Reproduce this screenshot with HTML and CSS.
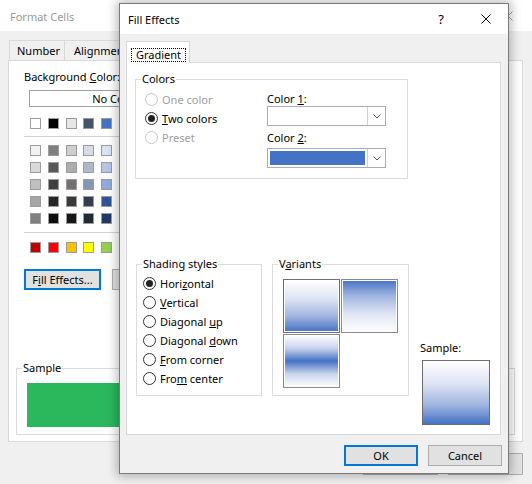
FILE: index.html
```html
<!DOCTYPE html>
<html>
<head>
<meta charset="utf-8">
<link rel="stylesheet" href="styles.css">
</head>
<body>
<div class="fc">
  <div class="fc-title">
    <span>Format Cells</span>
    <svg class="x-icon" width="10" height="10" viewBox="0 0 10 10"><path d="M0.5 0.5L9.5 9.5M9.5 0.5L0.5 9.5" stroke="#9a9a9a" stroke-width="1"/></svg>
  </div>
  <div class="fc-body">
    <div class="fc-tabs">
      <div class="fc-tab tab-number">Number</div>
      <div class="fc-tab tab-align">Alignment</div>
    </div>
    <div class="fc-panel">
      <div class="bg-label">Background <u>C</u>olor:</div>
      <div class="nocolor">No Color</div>
      <div class="swatches top-row">
        <span class="sw" style="background:#ffffff"></span>
        <span class="sw" style="background:#000000"></span>
        <span class="sw" style="background:#e7e6e6"></span>
        <span class="sw" style="background:#44546a"></span>
        <span class="sw" style="background:#4472c4"></span>
      </div>
      <div class="sep"></div>
      <div class="swatches grid">
        <span class="sw" style="background:#f2f2f2"></span>
        <span class="sw" style="background:#7f7f7f"></span>
        <span class="sw" style="background:#d0cece"></span>
        <span class="sw" style="background:#d6dce5"></span>
        <span class="sw" style="background:#dae3f3"></span>
        <span class="sw" style="background:#d9d9d9"></span>
        <span class="sw" style="background:#595959"></span>
        <span class="sw" style="background:#aeabab"></span>
        <span class="sw" style="background:#adb9ca"></span>
        <span class="sw" style="background:#b4c7e7"></span>
        <span class="sw" style="background:#bfbfbf"></span>
        <span class="sw" style="background:#404040"></span>
        <span class="sw" style="background:#757171"></span>
        <span class="sw" style="background:#8497b0"></span>
        <span class="sw" style="background:#8faadc"></span>
        <span class="sw" style="background:#a6a6a6"></span>
        <span class="sw" style="background:#262626"></span>
        <span class="sw" style="background:#3b3838"></span>
        <span class="sw" style="background:#333f50"></span>
        <span class="sw" style="background:#2f5597"></span>
        <span class="sw" style="background:#7f7f7f"></span>
        <span class="sw" style="background:#0d0d0d"></span>
        <span class="sw" style="background:#171717"></span>
        <span class="sw" style="background:#222a35"></span>
        <span class="sw" style="background:#1f3864"></span>
      </div>
      <div class="sep sep2"></div>
      <div class="swatches std-row">
        <span class="sw" style="background:#c00000"></span>
        <span class="sw" style="background:#ff0000"></span>
        <span class="sw" style="background:#ffc000"></span>
        <span class="sw" style="background:#ffff00"></span>
        <span class="sw" style="background:#92d050"></span>
      </div>
      <div class="fc-buttons">
        <div class="btn default fill-btn">F<u>i</u>ll Effects...</div>
        <div class="btn more-btn">More Colors...</div>
      </div>
      <fieldset class="fc-sample">
        <legend>Sample</legend>
        <div class="green"></div>
      </fieldset>
    </div>
    <div class="fc-footer">
      <div class="btn"></div>
      <div class="btn"></div>
    </div>
  </div>
</div>

<div class="fe">
  <div class="fe-title">
    <span class="fe-title-text">Fill Effects</span>
    <span class="help">?</span>
    <svg class="close" width="10" height="10" viewBox="0 0 10 10"><path d="M0.5 0.5L9.5 9.5M9.5 0.5L0.5 9.5" stroke="#000" stroke-width="1"/></svg>
  </div>
  <div class="fe-body">
    <div class="fe-tab"><span class="focus-text">Gradient</span></div>
    <div class="fe-panel">
      <fieldset class="colors">
        <legend>Colors</legend>
        <div class="colors-inner">
          <div class="radios">
            <div class="radio disabled"><span class="circle"></span><span>One color</span></div>
            <div class="radio checked"><span class="circle"></span><span><u>T</u>wo colors</span></div>
            <div class="radio disabled"><span class="circle"></span><span>Preset</span></div>
          </div>
          <div class="combos">
            <div class="combo-label first">Color <u>1</u>:</div>
            <div class="combo">
              <span class="combo-value"></span>
              <span class="combo-btn"><svg width="8" height="5" viewBox="0 0 8 5"><path d="M0.5 0.5L4 4L7.5 0.5" fill="none" stroke="#555" stroke-width="1"/></svg></span>
            </div>
            <div class="combo-label second">Color <u>2</u>:</div>
            <div class="combo combo2">
              <span class="combo-value"><span class="blue-bar"></span></span>
              <span class="combo-btn"><svg width="8" height="5" viewBox="0 0 8 5"><path d="M0.5 0.5L4 4L7.5 0.5" fill="none" stroke="#555" stroke-width="1"/></svg></span>
            </div>
          </div>
        </div>
      </fieldset>
      <div class="row2">
        <fieldset class="shading">
          <legend>Shading styles</legend>
          <div class="shading-inner">
            <div class="radio checked"><span class="circle"></span><span>Hori<u>z</u>ontal</span></div>
            <div class="radio"><span class="circle"></span><span><u>V</u>ertical</span></div>
            <div class="radio"><span class="circle"></span><span>Diagonal <u>u</u>p</span></div>
            <div class="radio"><span class="circle"></span><span>Diagonal <u>d</u>own</span></div>
            <div class="radio"><span class="circle"></span><span><u>F</u>rom corner</span></div>
            <div class="radio"><span class="circle"></span><span>Fro<u>m</u> center</span></div>
          </div>
        </fieldset>
        <fieldset class="variants">
          <legend>V<u>a</u>riants</legend>
          <div class="variant-grid">
            <div class="variant v1 selected"></div>
            <div class="variant v2"></div>
            <div class="variant v3"></div>
          </div>
        </fieldset>
        <div class="sample-col">
          <div class="sample-label">Sample:</div>
          <div class="sample-box"></div>
        </div>
      </div>
    </div>
    <div class="fe-buttons">
      <div class="btn default">OK</div>
      <div class="btn">Cancel</div>
    </div>
  </div>
</div>
</body>
</html>
```

FILE: styles.css
```css
* { box-sizing: border-box; }
html, body { margin: 0; padding: 0; }
body {
  width: 532px;
  height: 484px;
  overflow: hidden;
  position: relative;
  font-family: "Noto Sans", "Segoe UI", sans-serif;
  font-size: 11px;
  color: #000;
  background: #f0f0f0;
}
u { text-underline-offset: 1px; }

/* ---------- Format Cells (background window) ---------- */
.fc { width: 532px; height: 484px; background: #f0f0f0; }
.fc-title {
  height: 31px;
  background: #fff;
  display: flex;
  align-items: center;
  justify-content: space-between;
  padding: 1px 19px 0 10px;
  color: #9a9a9a;
}
.fc-body { padding: 9px 9px 0 8px; }
.fc-tabs { display: flex; height: 20px; margin-left: 1px; }
.fc-tab {
  border: 1px solid #d9d9d9;
  border-bottom: none;
  line-height: 19px;
  padding-left: 7px;
}
.tab-number { width: 56px; }
.tab-align { width: 90px; border-left: none; padding-left: 9px; }
.fc-panel {
  width: 515px;
  height: 382px;
  background: #fff;
  border: 1px solid #d9d9d9;
  padding-top: 8px;
}
.bg-label { margin-left: 15px; line-height: 15px; }
.nocolor {
  margin: 6px 0 0 20px;
  width: 172px;
  height: 17px;
  border: 1px solid #a0a0a0;
  text-align: center;
  line-height: 15px;
}
.swatches {
  display: grid;
  grid-template-columns: repeat(5, 11px);
  column-gap: 6.75px;
  row-gap: 6px;
  margin-left: 21px;
}
.top-row { margin-top: 11px; }
.grid { margin-top: 8px; }
.std-row { margin-top: 9px; }
.sw { width: 11px; height: 11px; border: 1px solid #9c9c9c; display: block; }
.sep { height: 1px; background: #d2d2d2; margin: 7px 0 0 15px; width: 220px; }
.sep2 { margin-top: 8px; }
.fc-buttons { display: flex; gap: 11px; margin: 16px 0 0 15px; }
.btn {
  width: 74px;
  height: 21px;
  background: #e1e1e1;
  border: 1px solid #adadad;
  display: flex;
  align-items: center;
  justify-content: center;
  white-space: nowrap;
}
.btn.default { border: 2px solid #0078d7; }
.fill-btn { width: 77px; }
.more-btn { width: 90px; }
.fc-sample {
  margin: 71px 0 0 7px;
  width: 499px;
  height: 74px;
}
fieldset {
  margin: 0;
  padding: 0;
  border: 1px solid #dcdcdc;
  min-width: 0;
}
legend { padding: 0 1px; margin-left: 5px; line-height: 14px; }
.green { margin: 8px 0 0 10px; width: 477px; height: 44px; background: #2bb75c; }
.fc-footer { display: flex; justify-content: flex-end; gap: 10px; margin-top: 11px; }
.fc-footer .btn { width: 75px; height: 22px; }

/* ---------- Fill Effects (foreground window) ---------- */
.fe {
  position: absolute;
  left: 119px;
  top: 3px;
  width: 390px;
  height: 471px;
  border: 1px solid #7a7a7a;
  background: #f0f0f0;
  box-shadow: 0 0 10px 2px rgba(0, 0, 0, 0.28);
  display: flex;
  flex-direction: column;
}
.fe-title {
  height: 30px;
  background: #fff;
  display: flex;
  align-items: center;
  padding: 0 17px 0 8px;
}
.fe-title-text { flex: 1; }
.help { font-size: 13px; margin-right: 37px; line-height: 14px; }
.fe-body { flex: 1; padding: 7px 7px 0 6px; }
.fe-tab {
  position: relative;
  z-index: 1;
  width: 64px;
  height: 22px;
  background: #fff;
  border: 1px solid #d9d9d9;
  border-bottom: none;
  margin-bottom: -1px;
  padding: 5px 0 0 4px;
}
.focus-text {
  display: inline-block;
  border: 1px dotted #000;
  padding: 0 4px;
  line-height: 12px;
  height: 14px;
}
.fe-panel {
  width: 375px;
  height: 373px;
  background: #fff;
  border: 1px solid #d9d9d9;
}
.colors { margin: 9px 0 0 8px; width: 273px; height: 107px; }
.colors-inner { display: flex; padding: 4px 0 0 9px; }
.radios { width: 122px; }
.radio { display: flex; align-items: center; height: 19px; gap: 4px; white-space: nowrap; }
.circle {
  width: 13px;
  height: 13px;
  border: 1px solid #333;
  border-radius: 50%;
  background: #fff;
  display: flex;
  align-items: center;
  justify-content: center;
  flex: none;
}
.radio.checked .circle::after {
  content: "";
  width: 7px;
  height: 7px;
  border-radius: 50%;
  background: #222;
}
.radio.disabled { color: #a0a0a0; }
.radio.disabled .circle { border-color: #c4c4c4; }
.combos { width: 119px; }
.combo-label { line-height: 14px; }
.combo-label.first { margin-top: 2px; }
.combo-label.second { margin-top: 5px; }
.combo {
  width: 119px;
  height: 20px;
  border: 1px solid #adadad;
  background: #fff;
  display: flex;
}
.combo2 { margin-top: 3px; }
.combo-value { flex: 1; padding: 2px; }
.blue-bar { display: block; width: 95px; height: 14px; background: #4472c4; }
.combo-btn {
  width: 18px;
  border-left: 1px solid #cfcfcf;
  display: flex;
  align-items: center;
  justify-content: center;
}
.row2 { display: flex; align-items: flex-start; margin: 78px 0 0 9px; }
.shading { width: 126px; height: 139px; }
.shading-inner { padding: 3px 0 0 6px; }
.variants { width: 137px; height: 139px; margin-left: 10px; }
.variant-grid {
  display: grid;
  grid-template-columns: 57px 57px;
  grid-template-rows: 54px 54px;
  gap: 1px;
  padding: 8px 0 0 10px;
}
.variant {
  border: 1px solid #8a8a8a;
  box-shadow: inset 0 0 0 1px #fff;
}
.variant.selected { border-color: #6f6f6f; }
.v1 { background: linear-gradient(to bottom, #ffffff 0%, #dfe5f4 35%, #9fb4e0 70%, #4472c4 100%); }
.v2 { background: linear-gradient(to top, #ffffff 0%, #dfe5f4 35%, #9fb4e0 70%, #4472c4 100%); }
.v3 { background: linear-gradient(to bottom, #ffffff 0%, #c9d4ee 25%, #4472c4 50%, #c9d4ee 75%, #ffffff 100%); }
.sample-col { margin-left: 11px; }
.sample-label { margin-top: 84px; line-height: 14px; }
.sample-box {
  margin: 5px 0 0 2px;
  width: 68px;
  height: 65px;
  border: 1px solid #6d6d6d;
  background: linear-gradient(to bottom, #ffffff 0%, #dfe5f4 35%, #9fb4e0 70%, #4472c4 100%);
}
.fe-buttons {
  display: flex;
  justify-content: flex-end;
  gap: 10px;
  margin: 10px -1px 0 0;
}
```
